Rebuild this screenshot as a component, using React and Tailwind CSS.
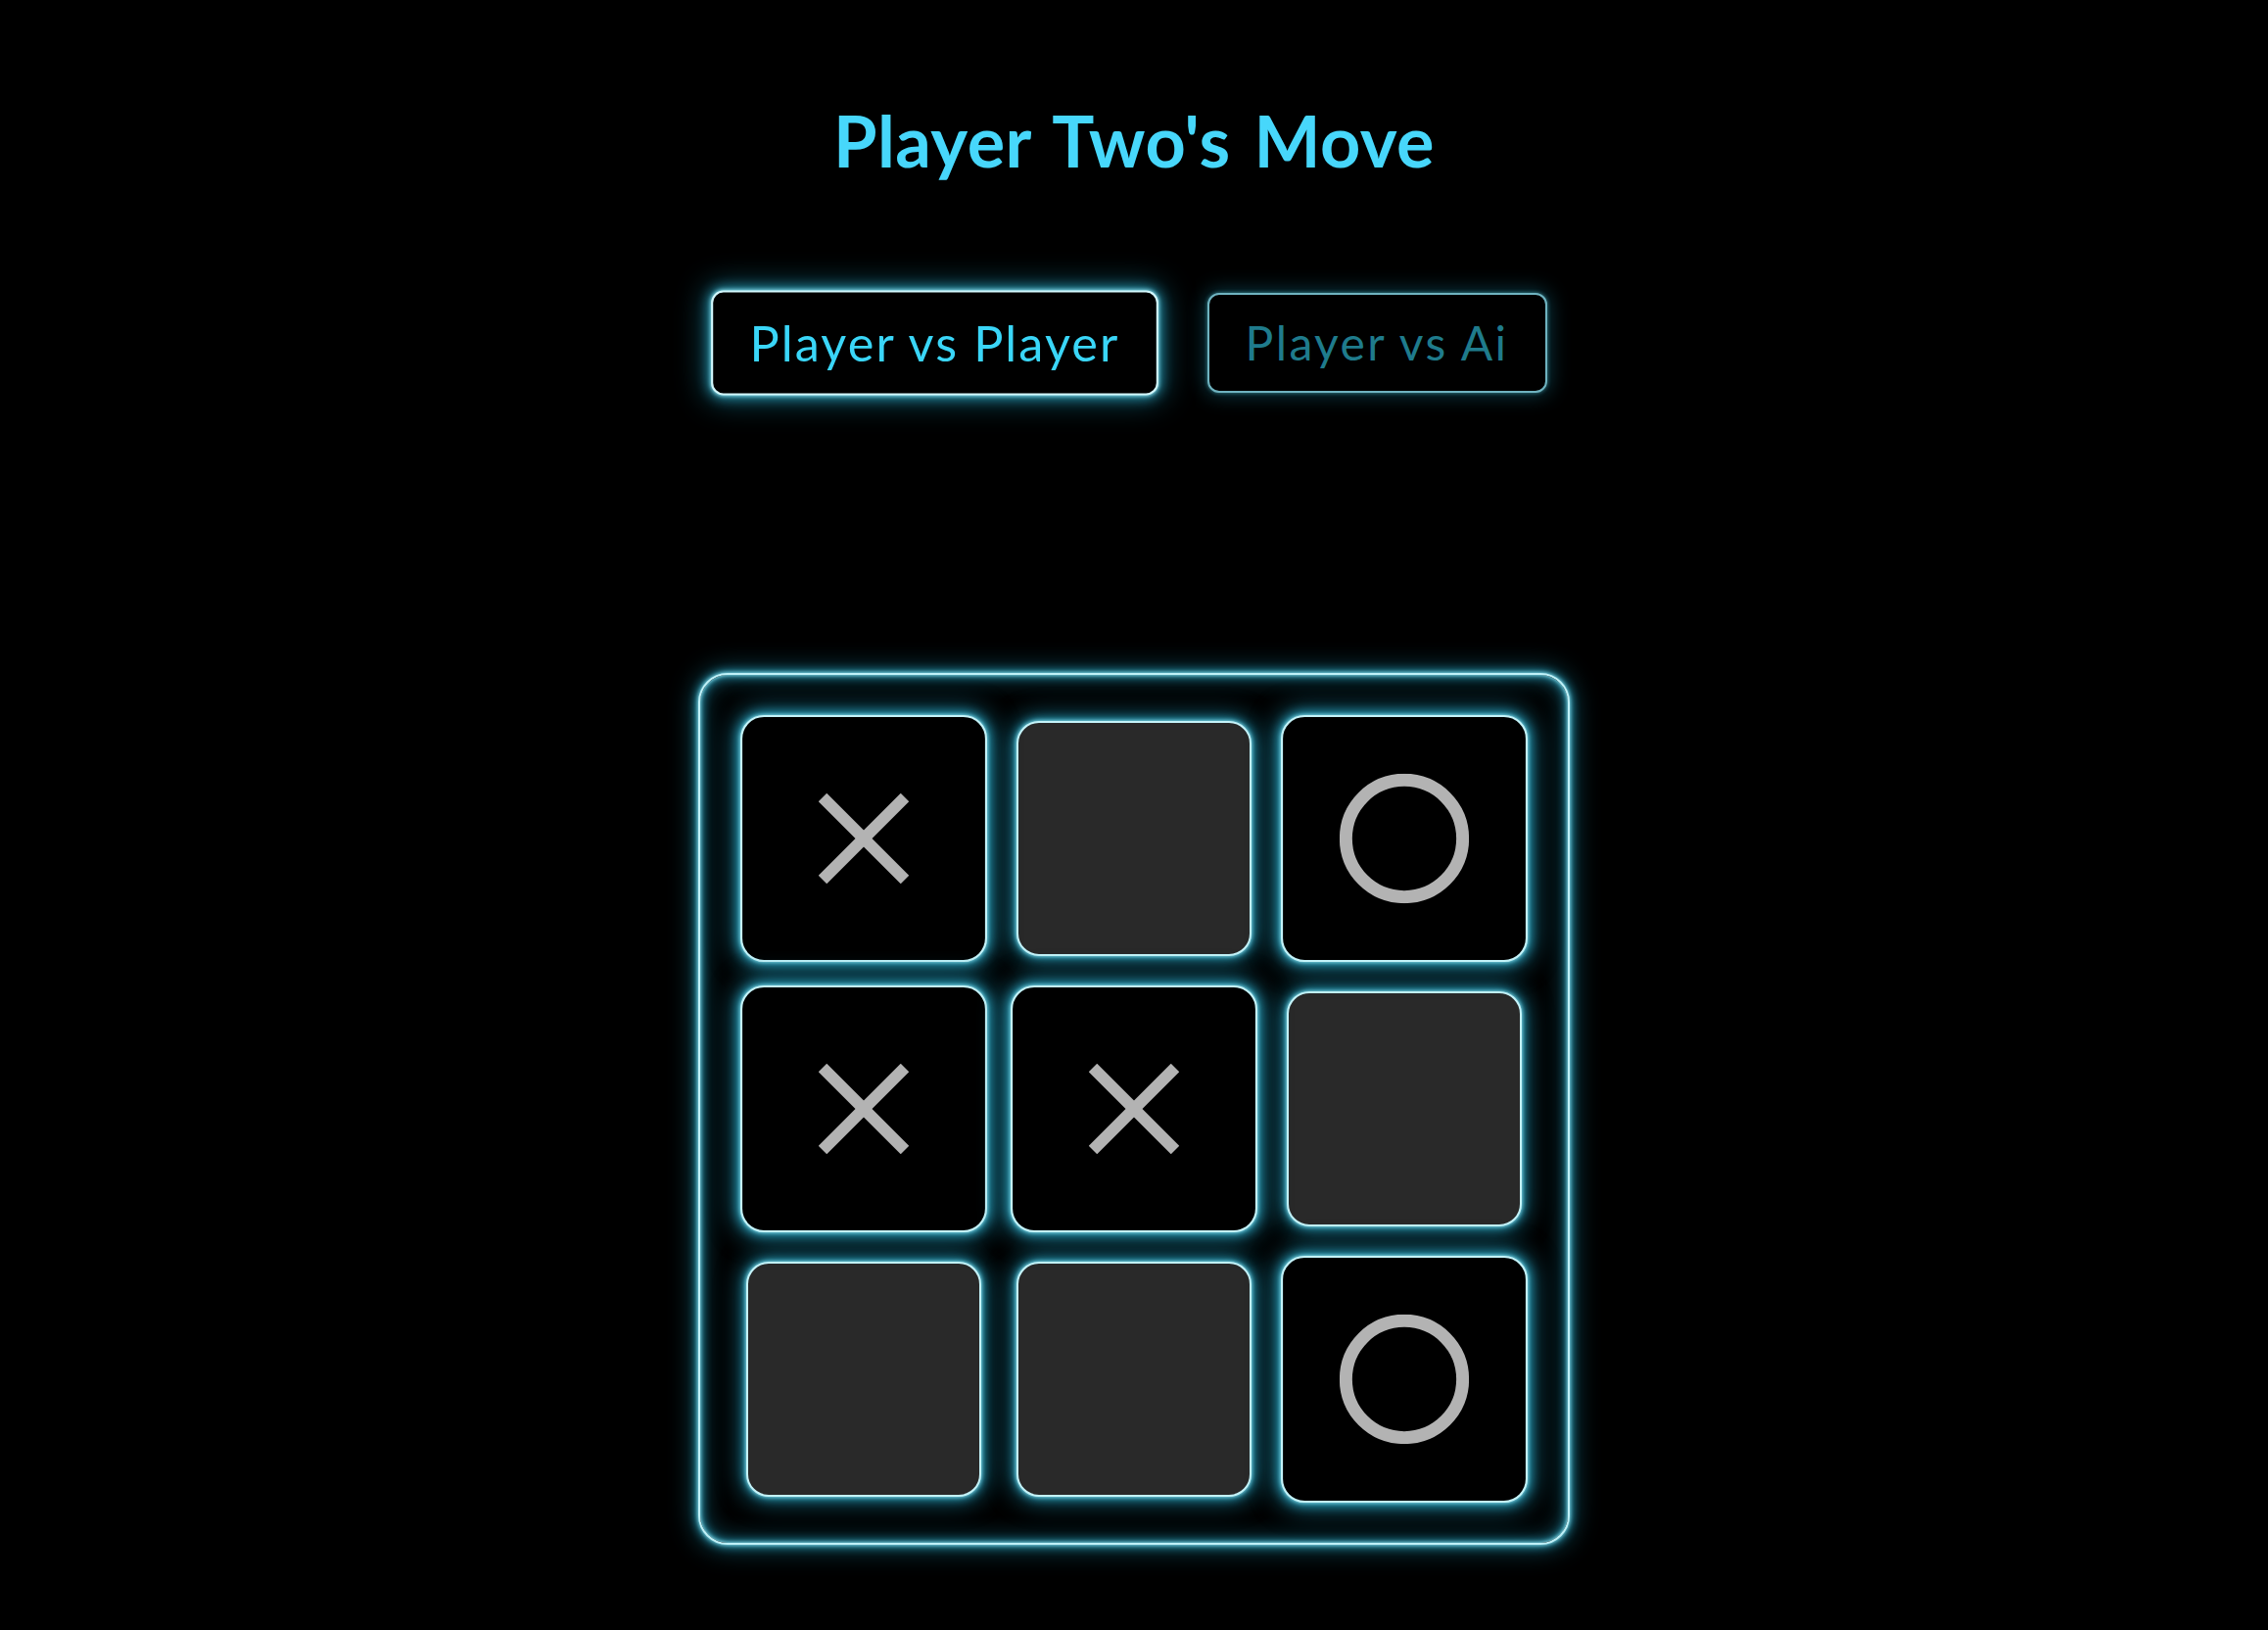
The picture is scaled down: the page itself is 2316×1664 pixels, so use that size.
import React, { useState } from 'react';

const START = ['X', null, 'O', 'X', 'X', null, null, null, 'O'];

function XMark() {
  return (
    <svg width="88" height="88" viewBox="0 0 88 88">
      <line x1="4" y1="4" x2="84" y2="84" stroke="#b3b3b3" strokeWidth="11.5" />
      <line x1="84" y1="4" x2="4" y2="84" stroke="#b3b3b3" strokeWidth="11.5" />
    </svg>
  );
}

function OMark() {
  return (
    <svg width="126" height="126" viewBox="0 0 126 126">
      <circle cx="63" cy="63" r="56.8" fill="none" stroke="#b3b3b3" strokeWidth="12.4" />
    </svg>
  );
}

function Cell({ value }) {
  return (
    <div
      className={
        value
          ? 'w-[240px] h-[240px] rounded-[23px] border-2 border-[#c4f3f9] bg-black scale-105 flex items-center justify-center shadow-[0_0_4px_#9eeefa,0_0_10px_2px_rgba(45,175,205,0.8),0_0_24px_6px_rgba(25,120,145,0.75)]'
          : 'w-[240px] h-[240px] rounded-[23px] border-2 border-[#c4f3f9] bg-[#292929] flex items-center justify-center shadow-[0_0_4px_#9eeefa,0_0_10px_2px_rgba(45,175,205,0.8),0_0_24px_6px_rgba(25,120,145,0.75)]'
      }
    >
      {value === 'X' && <XMark />}
      {value === 'O' && <OMark />}
    </div>
  );
}

export default function App() {
  const [mode, setMode] = useState('pvp');
  const [board] = useState(START);

  return (
    <div className="min-h-screen bg-black flex flex-col items-center pt-[100px] font-['Lato',sans-serif]">
      <h1 className="text-[72px] leading-[86px] font-bold text-[#47d7fb] tracking-[0.5px] [word-spacing:6px]">
        Player Two's Move
      </h1>

      <div className="mt-[113px] flex items-center gap-[61px]">
        <button
          onClick={() => setMode('pvp')}
          className={
            mode === 'pvp'
              ? 'w-[435px] h-[102px] rounded-xl border-2 border-[#d2f7fc] bg-black text-[48px] tracking-[2px] text-[#3ad6f8] scale-105 shadow-[0_0_4px_#9eeefa,0_0_12px_2px_rgba(45,175,205,0.8),0_0_28px_6px_rgba(25,120,145,0.6)]'
              : 'w-[435px] h-[102px] rounded-xl border-2 border-[#6fb3c0] bg-black text-[48px] tracking-[2px] text-[#1f7b8c] shadow-[0_0_4px_rgba(103,232,249,0.5),0_0_20px_3px_rgba(25,120,145,0.45)]'
          }
        >
          Player vs Player
        </button>
        <button
          onClick={() => setMode('ai')}
          className={
            mode === 'ai'
              ? 'w-[347px] h-[102px] rounded-xl border-2 border-[#d2f7fc] bg-black text-[48px] tracking-[2.4px] text-[#3ad6f8] scale-105 shadow-[0_0_4px_#9eeefa,0_0_12px_2px_rgba(45,175,205,0.8),0_0_28px_6px_rgba(25,120,145,0.6)]'
              : 'w-[347px] h-[102px] rounded-xl border-2 border-[#6fb3c0] bg-black text-[48px] tracking-[2.4px] text-[#1f7b8c] shadow-[0_0_4px_rgba(103,232,249,0.5),0_0_20px_3px_rgba(25,120,145,0.45)]'
          }
        >
          Player vs Ai
        </button>
      </div>

      <div className="mt-[286px] mb-[87px] w-[890px] h-[890px] rounded-[30px] border-2 border-[#bff1f8] bg-black p-[47px] grid grid-cols-[240px_240px_240px] grid-rows-[240px_240px_240px] gap-[36px] shadow-[0_0_4px_#9eeefa,0_0_10px_2px_rgba(45,175,205,0.8),0_0_26px_4px_rgba(25,120,145,0.6),inset_0_0_4px_#9eeefa,inset_0_0_10px_2px_rgba(45,175,205,0.75),inset_0_0_24px_4px_rgba(25,120,145,0.55)]">
        {board.map((v, i) => (
          <Cell key={i} value={v} />
        ))}
      </div>
    </div>
  );
}
